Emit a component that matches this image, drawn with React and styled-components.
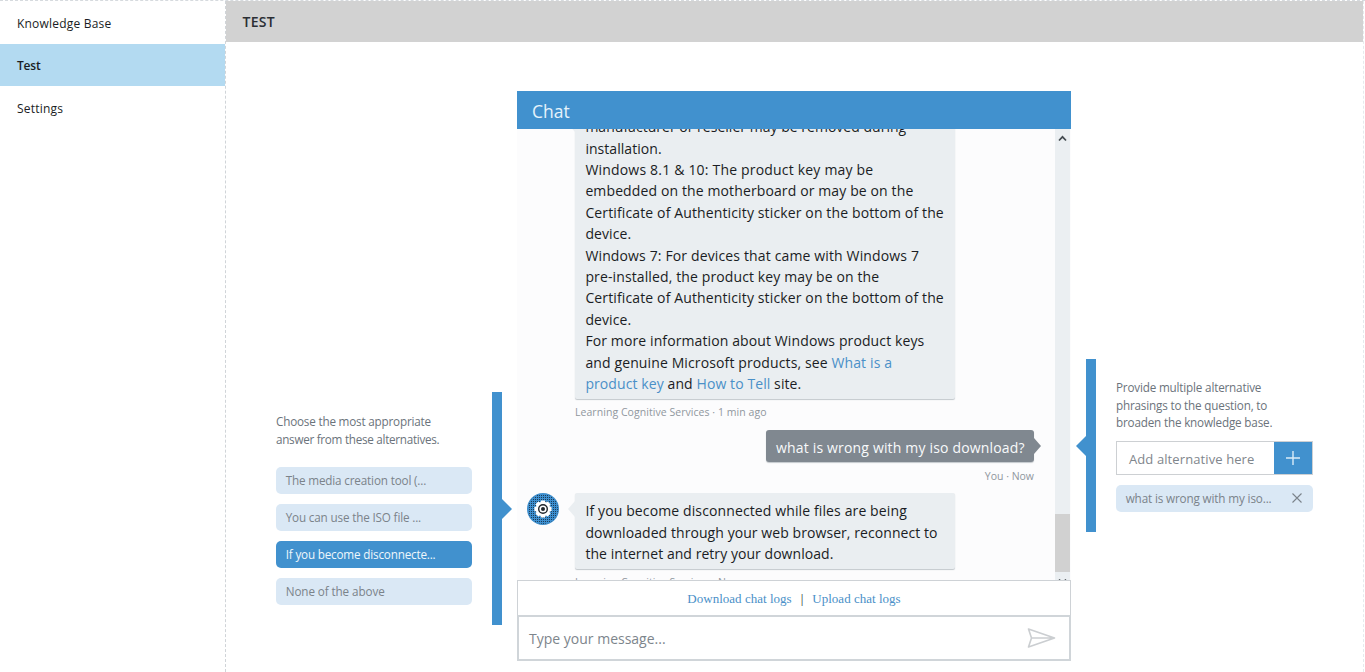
import React from 'react';
import styled, { createGlobalStyle, css } from 'styled-components';

const Global = createGlobalStyle`
  * { box-sizing: border-box; }
  body { margin: 0; background: #fff; color: #1a1d24; font-family: 'Open Sans', 'Noto Sans', sans-serif; overflow: hidden; }
  a { color: #4a90c8; text-decoration: none; }
`;

const Page = styled.div`display: flex; height: 672px; width: 1365px; border-top: 1px dashed #d6dade;`;

const Sidebar = styled.nav`width: 226px; flex: none; border-right: 1px dashed #d0d4d8;`;
const NavItem = styled.div`
  height: ${p => p.$h}px; display: flex; align-items: center; padding: ${p => p.$drop || 0}px 0 0 17px;
  font-size: 12px; letter-spacing: ${p => p.$ls || 0}px;
  ${p => p.$active && css`background: #b3daf1; font-weight: 600;`}
`;

const Main = styled.main`width: 1138px; border-right: 1px dashed #e6eaed; flex: none;`;
const Title = styled.header`
  height: 41px; background: #d2d2d2; padding: 0 0 0 16.5px; display: flex; align-items: center;
  font-size: 14px; font-weight: 600; color: #2b2e34; letter-spacing: 0.25px;
`;
const Content = styled.div`display: flex; align-items: flex-start; padding: 49px 0 0 50px;`;

const SidePanel = styled.aside`display: flex; margin-top: ${p => p.$top}px; margin-left: ${p => p.$gap || 0}px;`;
const Column = styled.div`width: 197px; padding-top: ${p => p.$pad}px;`;
const Hint = styled.div`font-size: 11.7px; line-height: 17.5px; color: #6b737b; white-space: nowrap; letter-spacing: ${p => p.$ls || 0}px;`;

const Rail = styled.div`
  position: relative; width: 10px; height: ${p => p.$h}px; background: #4191ce; flex: none;
  margin: ${p => p.$left ? '0 20px 0 0' : '0 0 0 19px'};
  &::after {
    content: ''; position: absolute; top: ${p => p.$tip}px; border: 10px solid transparent;
    ${p => p.$left ? css`right: 10px; border-left: 0; border-right-color: #4191ce;` : css`left: 10px; border-right: 0; border-left-color: #4191ce;`}
  }
`;
const Pills = styled.div`display: flex; flex-direction: column; gap: 10px; margin-top: ${p => p.$top}px;`;
const Pill = styled.div`
  width: ${p => p.$w || 196}px; height: 27px; border-radius: 5px; padding: 0 11px 1px 9.7px; display: flex; align-items: center; justify-content: space-between;
  font-size: 11.7px; white-space: nowrap; letter-spacing: ${p => p.$ls || 0}px;
  background: ${p => p.$active ? '#4191ce' : '#dae8f5'}; color: ${p => p.$active ? '#eef7fc' : '#7b838a'};
`;

const Chat = styled.section`width: 554px; height: 570px; margin-left: 15px;`;
const ChatHead = styled.div`
  height: 38px; background: #4191ce; color: #e6f3fb; font-size: 17.5px; padding: 2px 0 0 15px; display: flex; align-items: center;
`;
const Viewport = styled.div`height: 451px; display: flex; overflow: hidden; background: #fcfcfd;`;
const Messages = styled.div`flex: 1; padding: 0 21px 0 10px; display: flex; flex-direction: column; margin-top: -21px; flex-shrink: 0;`;
const Row = styled.div`display: flex; justify-content: ${p => p.$mine ? 'flex-end' : 'flex-start'};`;
const Avatar = styled.div`width: 48px; flex: none; height: 32px; svg { display: block; }`;
const Bubble = styled.div`
  position: relative; font-size: 14px; line-height: 21.43px; white-space: nowrap; box-shadow: 0 1px 1px #c3c8cc;
  ${p => p.$mine
    ? css`background: #808890; color: #f8fafb; border-radius: 3px; height: 32px; width: 268px; padding: 7px 10px;`
    : css`background: #eaeef1; width: 380px; padding: ${p.$top || 8.1}px 10px ${p.$bottom || 4.9}px 10.4px; border-radius: 2px;`}
  &::after {
    content: ''; position: absolute; border: 8px solid transparent;
    ${p => p.$mine && css`left: 100%; top: 8px; border-right: 0; border-left: 7px solid #808890;`}
    ${p => !p.$mine && css`right: 100%; top: 8px; border-left: 0; border-right: 7px solid #eaeef1;`}
  }
`;
const Line = styled.div`letter-spacing: ${p => p.$ls || 0}px; height: 21.43px;`;
const Meta = styled.div`
  font-size: 10.5px; line-height: 14px; color: #90979d; white-space: nowrap; letter-spacing: ${p => p.$ls || 0}px;
  ${p => p.$mine ? css`text-align: right; margin: 7px 0 10px;` : css`margin: 6px 0 11px 48px;`}
`;
const Scroll = styled.div`
  width: 15px; flex: none; margin-right: 1px; background: #ebeff2; display: flex; flex-direction: column; align-items: center; justify-content: space-between; padding-top: 6px;
`;
const Thumb = styled.div`width: 15px; height: 58px; background: #d1d1d1; margin-top: auto;`;
const ScrollEnd = styled.div`height: 8px; display: flex; align-items: flex-end; overflow: hidden; svg { margin-bottom: -5px; }`;
const Logs = styled.div`
  height: 35px; border: 1px solid #ced2d6; border-bottom: 0; display: flex; justify-content: center; align-items: center; gap: 9px; padding-top: 1px;
  font-family: 'Liberation Serif', serif; font-size: 13px; letter-spacing: 0.02px;
`;
const Composer = styled.div`
  height: 46px; border: 2px solid #d0d5d9; display: flex; align-items: center; justify-content: space-between; padding: 1px 13px 0 10px;
  font-size: 14px; color: #7d858c; background: #fff;
  svg { margin-bottom: 2px; }
`;

const AddBox = styled.div`display: flex; width: 197px; height: 34px; border: 1px solid #cdd0d3; margin-top: 9px;`;
const AddInput = styled.div`flex: 1; display: flex; align-items: center; padding: 2px 0 0 12px; font-size: 13px; color: #7f868c; white-space: nowrap; letter-spacing: 0.1px;`;
const AddButton = styled.div`width: 38px; background: #4191ce; display: flex; align-items: center; justify-content: center;`;

const longAnswer = [
  ['manufacturer or reseller may be removed during', 0.02],
  ['installation.', 0.05],
  ['Windows 8.1 & 10: The product key may be', 0.19],
  ['embedded on the motherboard or may be on the', 0.12],
  ['Certificate of Authenticity sticker on the bottom of the', 0.13],
  ['device.', 0.1],
  ['Windows 7: For devices that came with Windows 7', 0.14],
  ['pre-installed, the product key may be on the', 0.12],
  ['Certificate of Authenticity sticker on the bottom of the', 0.13],
  ['device.', 0.1],
  ['For more information about Windows product keys', 0.11],
];

const Gear = () => (
  <svg width="32" height="32" viewBox="0 0 32 32">
    <defs>
      <pattern id="dots" width="2" height="2" patternUnits="userSpaceOnUse">
        <rect width="2" height="2" fill="#3d8fd0" />
        <rect width="1" height="1" fill="#1d3d57" />
      </pattern>
    </defs>
    <circle cx="16" cy="16" r="16" fill="#3f8dca" />
    <circle cx="16" cy="16" r="15" fill="url(#dots)" />
    <g fill="#fff">
      <circle cx="16" cy="16" r="7.3" />
      {[0, 45, 90, 135].map(a => <rect key={a} x="13.8" y="7.4" width="4.4" height="17.2" rx="0.6" transform={`rotate(${a} 16 16)`} />)}
    </g>
    <circle cx="16" cy="16" r="4.3" fill="none" stroke="#20252b" strokeWidth="1.4" />
    <circle cx="16" cy="16" r="2" fill="#20252b" />
  </svg>
);

const Chevron = ({ down }) => (
  <svg width="9" height="7" viewBox="0 0 9 7" fill="none" stroke="#444b50" strokeWidth="1.7">
    <path d={down ? 'M1 1.5 4.5 5 8 1.5' : 'M1 5.5 4.5 1.8 8 5.5'} />
  </svg>
);

export default function App() {
  return (
    <>
      <Global />
      <Page>
        <Sidebar>
          <NavItem $h={43} $drop={2} $ls={0.2}>Knowledge Base</NavItem>
          <NavItem $h={42} $active $ls={-0.2}>Test</NavItem>
          <NavItem $h={44} $ls={0.2}>Settings</NavItem>
        </Sidebar>
        <Main>
          <Title>TEST</Title>
          <Content>
            <SidePanel $top={301}>
              <Column $pad={21}>
                <Hint $ls={-0.19}>Choose the most appropriate</Hint>
                <Hint $ls={-0.28}>answer from these alternatives.</Hint>
                <Pills $top={19}>
                  <Pill $ls={-0.16}>The media creation tool (...</Pill>
                  <Pill $ls={-0.16}>You can use the ISO file ...</Pill>
                  <Pill $active $ls={-0.18}>If you become disconnecte...</Pill>
                  <Pill $ls={-0.1}>None of the above</Pill>
                </Pills>
              </Column>
              <Rail $h={233} $tip={107} />
            </SidePanel>
            <Chat>
              <ChatHead>Chat</ChatHead>
              <Viewport>
                <Messages>
                  <Row>
                    <Avatar />
                    <Bubble>
                      {longAnswer.map(([text, ls], i) => <Line key={i} $ls={ls}>{text}</Line>)}
                      <Line $ls={0.12}>and genuine Microsoft products, see <a>What is a</a></Line>
                      <Line $ls={0.09}><a>product key</a> and <a>How to Tell</a> site.</Line>
                    </Bubble>
                  </Row>
                  <Meta $ls={0.05}>Learning Cognitive Services · 1 min ago</Meta>
                  <Row $mine><Bubble $mine><Line $ls={0.17}>what is wrong with my iso download?</Line></Bubble></Row>
                  <Meta $mine>You · Now</Meta>
                  <Row>
                    <Avatar><Gear /></Avatar>
                    <Bubble $top={7} $bottom={4}>
                      <Line $ls={0.12}>If you become disconnected while files are being</Line>
                      <Line $ls={0.07}>downloaded through your web browser, reconnect to</Line>
                      <Line $ls={0.05}>the internet and retry your download.</Line>
                    </Bubble>
                  </Row>
                  <Meta $ls={0.05}>Learning Cognitive Services · Now</Meta>
                </Messages>
                <Scroll>
                  <Chevron />
                  <Thumb />
                  <ScrollEnd><Chevron down /></ScrollEnd>
                </Scroll>
              </Viewport>
              <Logs><a>Download chat logs</a><span>|</span><a>Upload chat logs</a></Logs>
              <Composer>
                <span>Type your message...</span>
                <svg width="29" height="20" viewBox="0 0 29 20" fill="none" stroke="#cbced1" strokeWidth="1.6" strokeLinejoin="round">
                  <path d="M1.5 1 27.5 10 1.5 19 4.5 10Z M4.5 10H27" />
                </svg>
              </Composer>
            </Chat>
            <SidePanel $top={268} $gap={15}>
              <Rail $h={173} $tip={77} $left />
              <Column $pad={20}>
                <Hint $ls={-0.18}>Provide multiple alternative<br />phrasings to the question, to<br />broaden the knowledge base.</Hint>
                <AddBox>
                  <AddInput>Add alternative here</AddInput>
                  <AddButton>
                    <svg width="14" height="14" viewBox="0 0 14 14" stroke="#d9ecf8" strokeWidth="1.4"><path d="M7 0V14M0 7H14" /></svg>
                  </AddButton>
                </AddBox>
                <Pills $top={10}>
                  <Pill $w={197} $ls={-0.14}>
                    <span>what is wrong with my iso...</span>
                    <svg width="10" height="10" viewBox="0 0 10 10" stroke="#7b838a" strokeWidth="1.1"><path d="M.5 .5 9.5 9.5M9.5 .5 .5 9.5" /></svg>
                  </Pill>
                </Pills>
              </Column>
            </SidePanel>
          </Content>
        </Main>
      </Page>
    </>
  );
}
